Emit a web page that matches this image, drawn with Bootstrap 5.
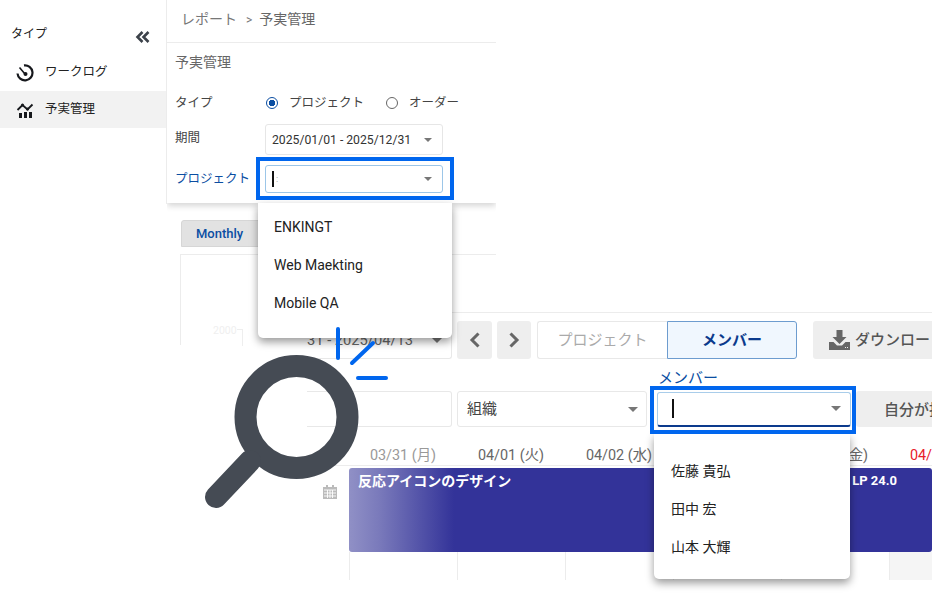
<!DOCTYPE html>
<html lang="ja">
<head>
<meta charset="utf-8">
<title>予実管理</title>
<link href="https://cdn.jsdelivr.net/npm/bootstrap@5.3.0/dist/css/bootstrap.min.css" rel="stylesheet">
<style>
html,body{margin:0;background:#fff;overflow:hidden}
body{font-family:Roboto,"Noto Sans CJK JP",sans-serif;color:#333}
.stage{position:relative;width:932px;height:595px;overflow:hidden;background:#fff}
.win{position:absolute;background:#fff}
.win-side{left:0;top:0;width:167px;height:204px;border-right:1px solid #ececec}
.side-head{height:54px;padding:25px 11px 0 11px;font-size:12px;position:relative;color:#222}
.side-fold{position:absolute;left:135px;top:30px}
.side-row{height:37px;padding-left:16px;font-size:12.5px;color:#222;gap:11px}
.side-row.on{background:#f2f2f2}
.side-ico{width:18px;height:18px;flex:none}
.win-top{left:167px;top:0;width:329px;height:345px}
.crumb{height:43px;border-bottom:1px solid #ececec;padding:10px 0 0 14px;font-size:14px;color:#777;line-height:18px}
.crumb-sep{font-size:12px;margin:0 7px 0 9px}
.crumb-cur{color:#666;font-size:14px}
.filter{height:160px;padding:9px 8px 0 8px;box-shadow:0 3px 6px rgba(0,0,0,.16);clip-path:inset(0 0 -12px 0);position:relative}
.filter-title{font-size:14px;color:#666;line-height:20px;margin-bottom:20px}
.frow{font-size:12.5px;color:#444;line-height:18px}
.frow-lab{width:90px;flex:none}
.frow-lab.act{color:#0b4ea2}
.rad-group{gap:11px}
.rad-first{margin-left:1px}
.rad-next{margin-left:22px}
.frow-date{margin-top:10px}
.frow-date .frow-lab{margin-top:-3px}
.frow-proj{margin-top:10px}
.frow-type{height:22px}
.pick{width:178px;height:31px;border:1px solid #e6e6e6;border-radius:3px;padding:0 10px 0 6px;font-size:12.2px;color:#333;background:#fff}
.pick.act{height:28px;border-color:#9cc6e8;border-radius:3px}
.tri{width:0;height:0;border-left:4px solid transparent;border-right:4px solid transparent;border-top:4px solid #777;margin-left:auto;flex:none}
.tri-big{border-left-width:5px;border-right-width:5px;border-top-width:5px}
.caret-bar{width:2px;height:16px;background:#111;display:block;flex:none}
.caret-dot{font-size:9px;color:#999;margin-left:2px;line-height:16px}
.rad{width:12px;height:12px;border-radius:50%;border:1px solid #666;flex:none;background:#fff}
.rad.on{border-color:#0b4ea2;background:radial-gradient(circle,#0b4ea2 3px,#fff 3.5px)}
.tab-m{position:absolute;left:14px;top:220px;width:82px;height:27px;background:#e2e2e2;border:1px solid #d6d6d6;border-radius:3px 0 0 0;color:#0b4ea2;font-size:13px;font-weight:500;padding-left:14px;line-height:26px}
.chart-box{position:absolute;left:13px;top:254px;width:316px;height:91px;border:1px solid #ececec;border-right:0;border-bottom:0}
.chart-num{position:absolute;left:32px;top:68px;font-size:10.5px;color:#efefef}
.chart-ax{position:absolute;left:56px;top:74px;width:6px;height:17px;border-top:1px solid #eee;border-right:1px solid #eee}
.win-low{left:307px;top:312px;width:625px;height:268px;border-top:1px solid #ececec}
.tool{height:38px;margin-top:8px;gap:5px}
.tool-date{width:145px;height:38px;border:1px solid #e8e8e8;border-top-color:transparent;border-left:0;border-radius:0 3px 3px 0;font-size:14.700px;color:#666;padding-right:9px;flex:none;white-space:nowrap}
.nav-sq{width:34px;height:38px;background:#eee;border-radius:3px;border:0;padding:0;flex:none}
.nav-prev{width:35px}
.seg{width:260px;height:38px;margin-left:1px;flex:none}
.seg-a,.seg-b{flex:1 1 50%;font-size:15px;padding:0;border-radius:3px}
.seg-a{border:1px solid #e8e8e8;border-right:0;color:#aaa;border-radius:3px 0 0 3px}
.seg-b{border:1px solid #6d9ccf;background:#f0f7fe;color:#0b3a8c;font-weight:700;border-radius:0 3px 3px 0}
.dl{width:119px;height:38px;margin-left:11px;background:#eee;border-radius:3px 0 0 3px;font-size:15px;color:#555;font-weight:500;padding-left:16px;white-space:nowrap;gap:5px;flex:none;overflow:hidden}
.dl-ico{flex:none}
.memb-lab{height:32px;padding:9px 0 0 351px;font-size:15px;line-height:20px;color:#0b4ea2}
.tool2{height:36px;gap:5px}
.blank{width:145px;height:36px;border:1px solid #e8e8e8;border-left:0;border-radius:0 3px 3px 0;flex:none}
.org{width:190px;height:36px;border:1px solid #e8e8e8;border-radius:3px;font-size:15px;color:#444;padding:1px 8px 0 9px;flex:none}
.mem{width:194px;height:35px;margin-left:5px;border:1px solid #a9cdea;border-bottom:2px solid #0b3a8c;border-radius:3px;padding:0 9px 0 14px;flex:none}
.mem .caret-bar{height:19px}
.self{flex:1;height:36px;background:#eee;font-size:15px;color:#555;font-weight:500;padding:2px 0 0 28px;white-space:nowrap;overflow:hidden;border-radius:3px 0 0 3px}
.dates{height:18px;margin-top:20px;padding-left:42px;border-bottom:1px solid #ececec;box-sizing:content-box}
.dates>span{width:108px;flex:none;text-align:center;font-size:14.400px;line-height:20px;color:#999;white-space:nowrap}
.dates>span.d2{color:#666}
.dates>span.hol{color:#e8202a}
.bar-wrap{padding:2px 0 0 42px;position:relative}
.plan{height:84px;border-radius:3px;background:linear-gradient(90deg,#9090c6 0,#7a7abb 30px,#333399 105px);color:#fff;font-size:14px;font-weight:600;padding:4px 9px;line-height:18px;width:583px}
.plan-r{margin-left:auto;margin-right:26px;font-size:13px;font-weight:700}
.cells{height:28px;padding-left:42px}
.cells>i{display:block;width:108px;flex:none;border-left:1px solid #ececec}
.cells>i.off{background:#f5f5f5}
.cal{position:absolute;left:16px;top:172px}
.menu{position:absolute;background:#fff;border-radius:0 0 5px 5px;box-shadow:0 4px 9px rgba(0,0,0,.4)}
.menu-a{left:258px;top:203px;width:194px;height:135px;padding-top:5px}
.menu-b{left:654px;top:434px;width:196px;height:145px;padding-top:18px}
.opt{height:38px;padding-left:16px;font-size:14px;line-height:38px;color:#222}
.menu-b .opt{padding-left:17px}
.hl{position:absolute;border:4px solid #0066ee;pointer-events:none}
.hl-a{left:256px;top:157px;width:198px;height:43px}
.hl-b{left:650px;top:386px;width:206px;height:48px}
.art{position:absolute;left:0;top:0}
</style>
</head>
<body>
<div class="stage">

  <div class="win win-side">
    <div class="side-head">タイプ
      <svg class="side-fold" width="15" height="14" viewBox="0 0 15 14"><path d="M7.500 2 2.500 7l5 5M13.500 2l-5 5 5 5" fill="none" stroke="#3c424a" stroke-width="2.600"/></svg>
    </div>
    <div class="side-row d-flex align-items-center">
      <svg class="side-ico" viewBox="0 0 18 18"><path d="M8 1.400A7.500 7.500 0 1 1 1.500 9.500" fill="none" stroke="#16181c" stroke-width="2.200"/><path d="M3.500 3.500 9 10" stroke="#16181c" stroke-width="1.600"/><circle cx="9.500" cy="10" r="2" fill="#16181c"/></svg>
      <span>ワークログ</span>
    </div>
    <div class="side-row on d-flex align-items-center">
      <svg class="side-ico" viewBox="0 0 18 18"><path d="M1.500 9 6.500 4l5 4.500 5-5" fill="none" stroke="#16181c" stroke-width="1.800"/><circle cx="6.500" cy="4" r="1.500" fill="#16181c"/><circle cx="11.500" cy="8" r="1.500" fill="#16181c"/><rect x="3" y="12" width="3" height="5" fill="#16181c"/><rect x="8" y="11" width="3" height="6" fill="#16181c"/><rect x="13" y="11" width="3" height="6" fill="#16181c"/></svg>
      <span>予実管理</span>
    </div>
  </div>

  <div class="win win-top">
    <div class="crumb">レポート<span class="crumb-sep">&gt;</span><span class="crumb-cur">予実管理</span></div>
    <div class="filter">
      <div class="filter-title">予実管理</div>
      <div class="frow frow-type d-flex align-items-center">
        <span class="frow-lab">タイプ</span>
        <span class="d-flex align-items-center rad-group rad-first"><span class="rad on"></span><span>プロジェクト</span></span>
        <span class="d-flex align-items-center rad-group rad-next"><span class="rad"></span><span>オーダー</span></span>
      </div>
      <div class="frow frow-date d-flex align-items-center">
        <span class="frow-lab">期間</span>
        <div class="pick d-flex align-items-center"><span>2025/01/01 - 2025/12/31</span><span class="tri"></span></div>
      </div>
      <div class="frow frow-proj d-flex align-items-center">
        <span class="frow-lab act">プロジェクト</span>
        <div class="pick act d-flex align-items-center"><span class="caret-bar"></span><span class="caret-dot">:</span><span class="tri"></span></div>
      </div>
    </div>
    <div class="tab-m">Monthly</div>
    <div class="chart-box"><span class="chart-num">2000</span><span class="chart-ax"></span></div>
  </div>

  <div class="win win-low">
    <div class="tool d-flex align-items-center">
      <div class="tool-date d-flex align-items-center"><span>31 - 2025/04/13</span><span class="tri tri-big"></span></div>
      <button class="btn nav-sq nav-prev d-flex align-items-center justify-content-center" type="button" aria-label="前へ"><svg width="14" height="18" viewBox="0 0 14 18"><path d="M10.500 2.500 4 9l6.500 6.500" fill="none" stroke="#666" stroke-width="3"/></svg></button>
      <button class="btn nav-sq d-flex align-items-center justify-content-center" type="button" aria-label="次へ"><svg width="14" height="18" viewBox="0 0 14 18"><path d="M3.500 2.500 10 9l-6.500 6.500" fill="none" stroke="#666" stroke-width="3"/></svg></button>
      <div class="seg d-flex"><button class="btn seg-a" type="button">プロジェクト</button><button class="btn seg-b" type="button">メンバー</button></div>
      <div class="dl d-flex align-items-center"><svg class="dl-ico" width="21" height="20" viewBox="0 0 21 20"><path d="M7.500 0h6v7h4l-7 7-7-7h4z" fill="#666"/><path d="M0 12h4.500l3.500 3.500h5L16.500 12H21v8H0z" fill="#666"/><path d="M16 17.500h3" stroke="#eee" stroke-width="1.200" stroke-dasharray="1 1"/></svg><span>ダウンロード</span></div>
    </div>
    <div class="memb-lab">メンバー</div>
    <div class="tool2 d-flex align-items-center">
      <div class="blank"></div>
      <div class="org d-flex align-items-center"><span>組織</span><span class="tri tri-big"></span></div>
      <div class="mem d-flex align-items-center"><span class="caret-bar"></span><span class="tri tri-big"></span></div>
      <div class="self d-flex align-items-center">自分が担当</div>
    </div>
    <div class="dates d-flex align-items-center">
      <span>03/31 (月)</span><span class="d2">04/01 (火)</span><span class="d2">04/02 (水)</span><span class="d2">04/03 (木)</span><span class="d2">04/04 (金)</span><span class="hol">04/05 (土)</span>
    </div>
    <div class="bar-wrap">
      <div class="plan d-flex"><span>反応アイコンのデザイン</span><span class="plan-r">LP 24.0</span></div>
    </div>
    <div class="cells d-flex"><i></i><i></i><i></i><i></i><i></i><i class="off"></i></div>
    <svg class="cal" width="14" height="14" viewBox="0 0 14 14"><path d="M3 0h2v2h4V0h2v2h3v12H0V2h3z" fill="#bbb"/><path d="M1 5h12M1 8h12M1 11h12M4.500 5v8M7 5v8M9.500 5v8" stroke="#fff" stroke-width=".9"/></svg>
  </div>

  <div class="menu menu-a">
    <div class="opt">ENKINGT</div>
    <div class="opt">Web Maekting</div>
    <div class="opt">Mobile QA</div>
  </div>
  <div class="menu menu-b">
    <div class="opt">佐藤 貴弘</div>
    <div class="opt">田中 宏</div>
    <div class="opt">山本 大輝</div>
  </div>
  <div class="hl hl-a"></div>
  <div class="hl hl-b"></div>

  <svg class="art" width="932" height="595" viewBox="0 0 932 595">
    <g fill="none" stroke="#0066ee" stroke-width="4" stroke-linecap="round">
      <path d="M338 329v29"/><path d="M352 363 373 343"/><path d="M358 378h28"/>
    </g>
    <circle cx="296.500" cy="417" r="51" fill="none" stroke="#454b54" stroke-width="22"/>
    <path d="M250 461 216 497" fill="none" stroke="#454b54" stroke-width="22" stroke-linecap="round"/>
  </svg>
</div>
<script src="https://cdn.jsdelivr.net/npm/bootstrap@5.3.0/dist/js/bootstrap.bundle.min.js"></script>
</body>
</html>
